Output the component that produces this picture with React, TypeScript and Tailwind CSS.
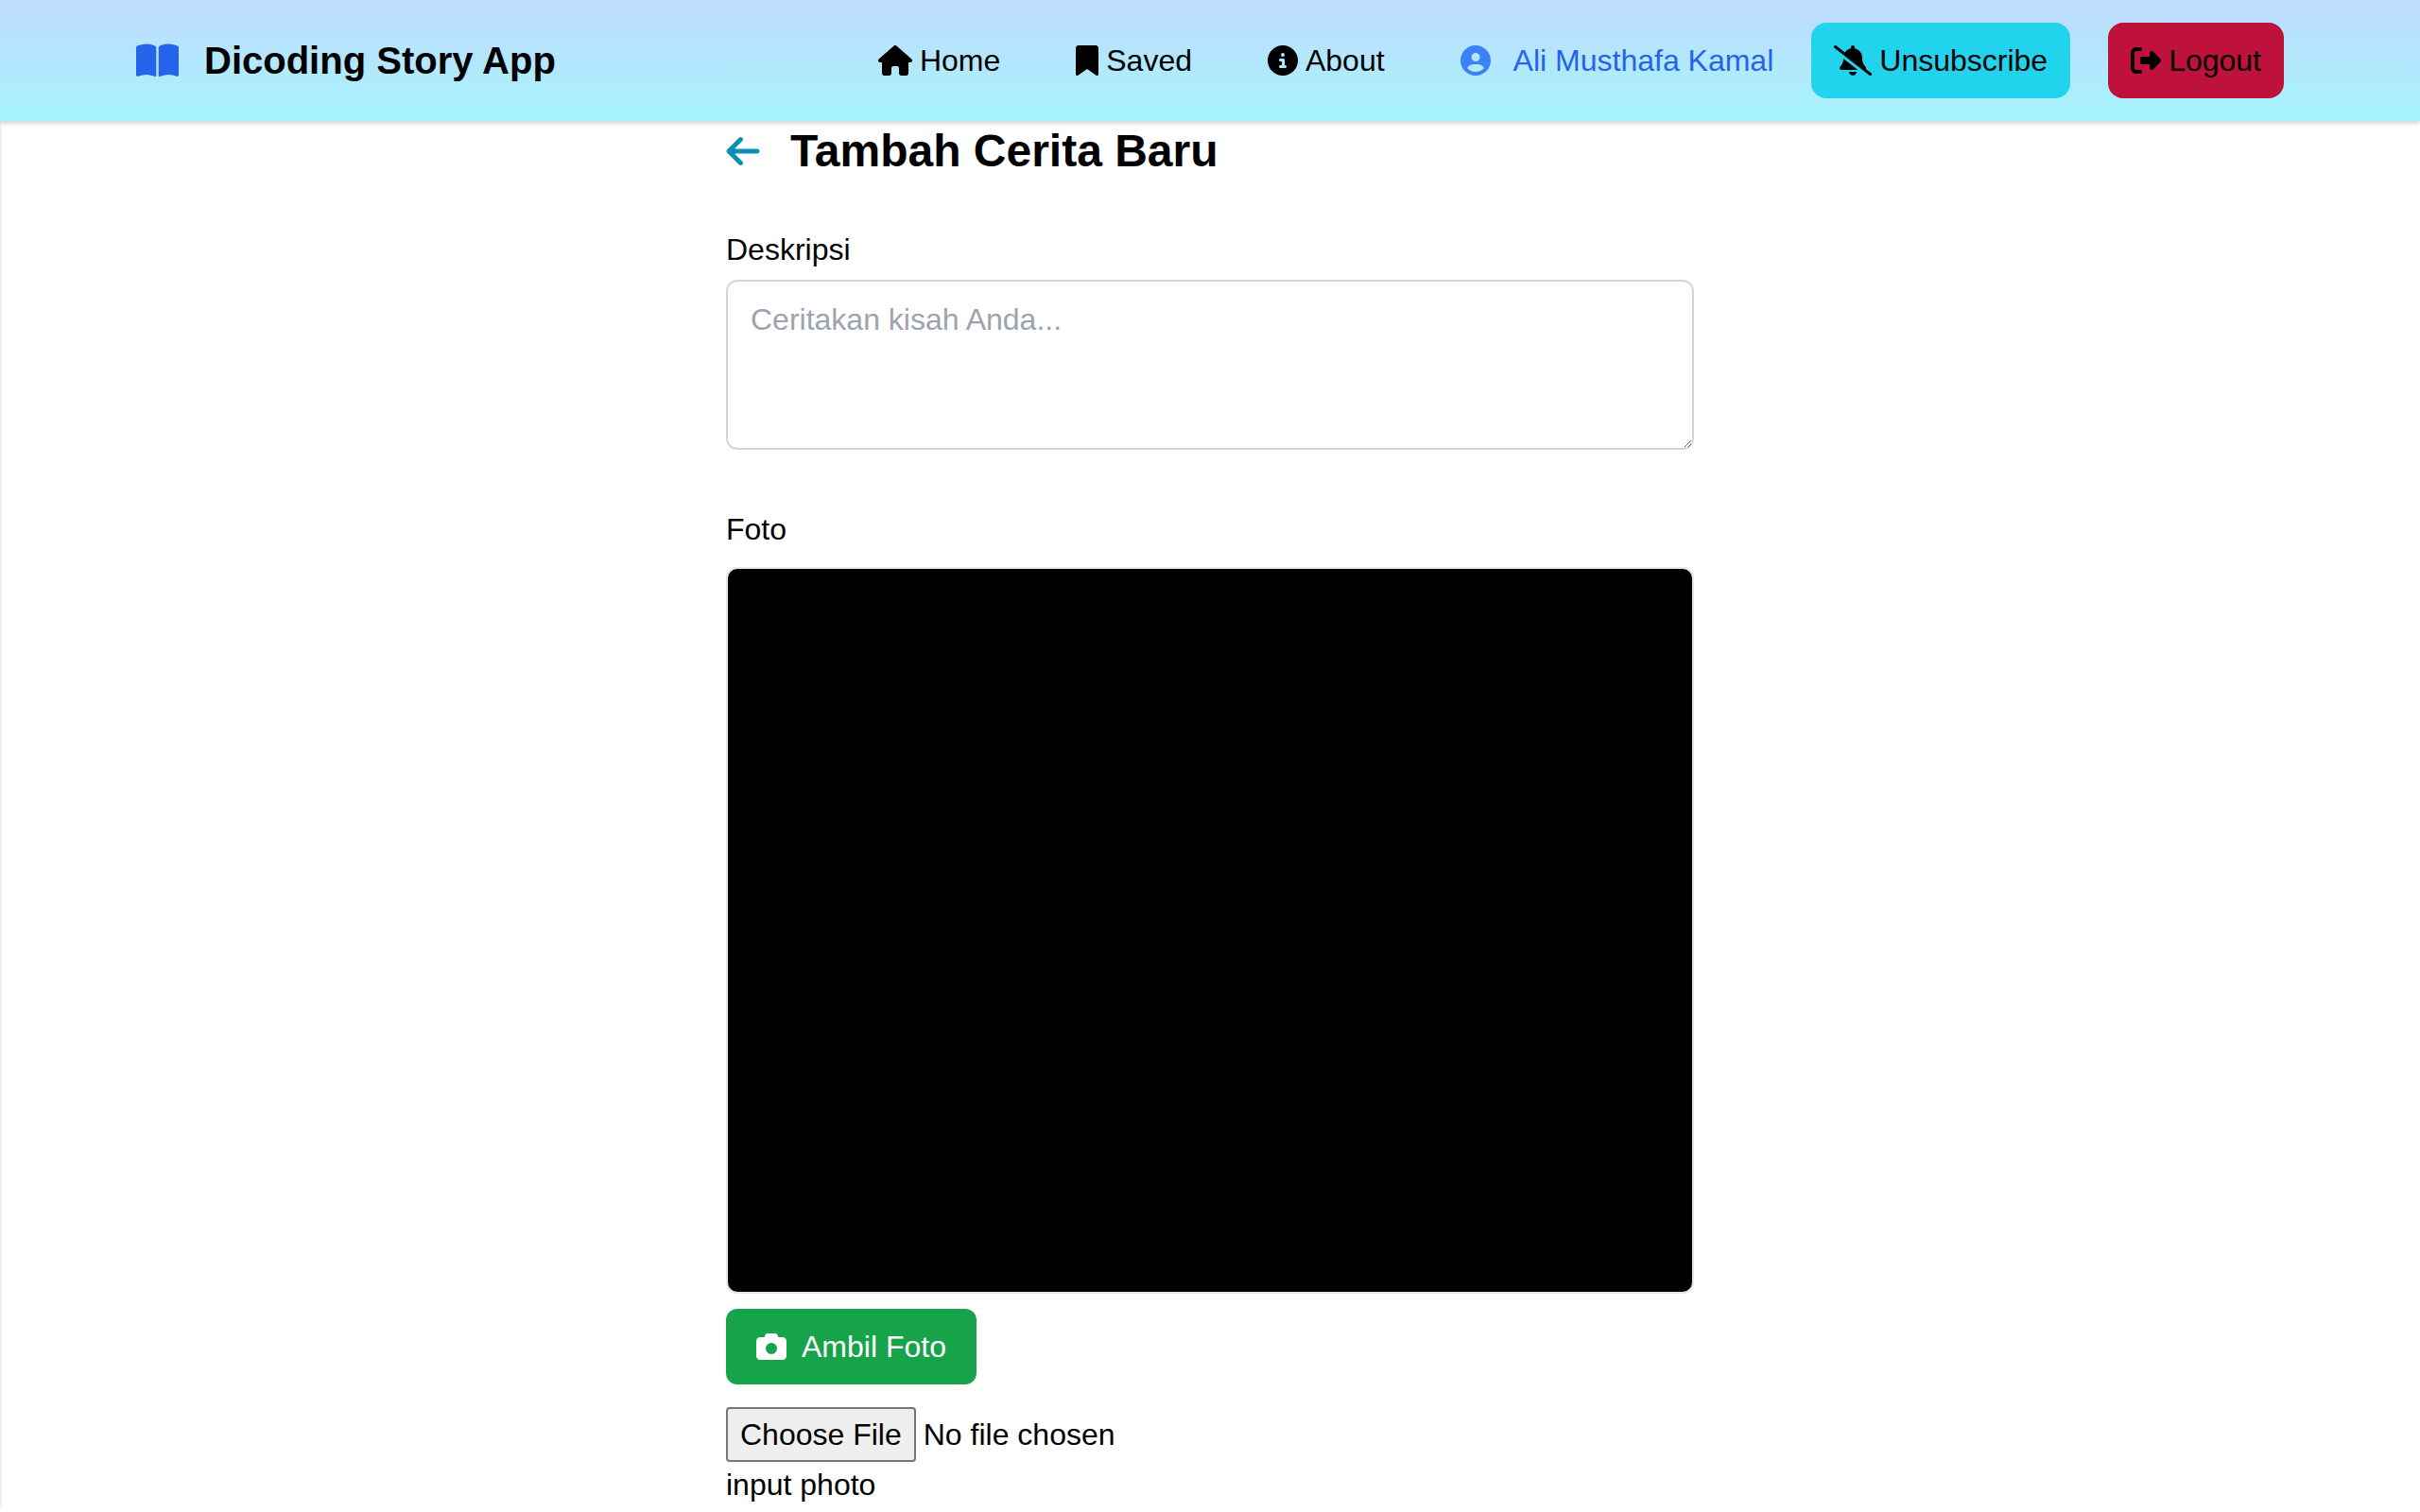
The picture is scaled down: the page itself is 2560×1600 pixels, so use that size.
import {
  FaArrowLeft,
  FaBellSlash,
  FaBookOpen,
  FaBookmark,
  FaCamera,
  FaCircleInfo,
  FaCircleUser,
  FaHouse,
  FaRightFromBracket,
} from "react-icons/fa6";

const links = [
  { label: "Home", Icon: FaHouse, size: "w-9" },
  { label: "Saved", Icon: FaBookmark, size: "w-6" },
  { label: "About", Icon: FaCircleInfo, size: "w-8" },
];

function Header() {
  return (
    <header className="relative z-10 flex h-32 items-center justify-between bg-linear-to-b from-[#bfdbfe] to-[#a5f3fc] px-36 shadow-[0_2px_6px_rgba(0,0,0,0.1),0_2px_4px_rgba(0,0,0,0.1)]">
      <a href="#" className="flex items-center gap-[27px] text-[40px] leading-[56px] font-bold">
        <FaBookOpen className="h-10 w-[45px] text-[#2563eb]" aria-hidden="true" />
        Dicoding Story App
      </a>
      <nav className="flex items-center gap-10">
        <ul className="flex items-center gap-20">
          {links.map(({ label, Icon, size }) => (
            <li key={label}>
              <a href="#" className="flex items-center gap-2">
                <Icon className={`h-8 ${size}`} aria-hidden="true" />
                {label}
              </a>
            </li>
          ))}
          <li>
            <a href="#" className="flex items-center gap-6 text-[#2563eb]">
              <FaCircleUser className="size-8 text-[#3b82f6]" aria-hidden="true" />
              Ali Musthafa Kamal
            </a>
          </li>
        </ul>
        <button type="button" className="flex h-20 items-center gap-2 rounded-2xl bg-[#22d3ee] px-6">
          <FaBellSlash className="h-8 w-10" aria-hidden="true" />
          Unsubscribe
        </button>
        <button type="button" className="flex h-20 items-center gap-2 rounded-2xl bg-[#be123c] px-6">
          <FaRightFromBracket className="size-8" aria-hidden="true" />
          Logout
        </button>
      </nav>
    </header>
  );
}

export default function App() {
  return (
    <div className="min-h-screen bg-white font-['Liberation_Sans',Arial,sans-serif] text-[32px] leading-[48px] text-black">
      <Header />
      <main className="shadow-[inset_2px_0_1px_#f0f1f2]">
        <form className="mx-auto flex w-full max-w-5xl flex-col items-start">
          <div className="flex items-center gap-8">
            <a href="#" aria-label="Kembali" className="text-[#0891b2]">
              <FaArrowLeft className="h-10 w-9" aria-hidden="true" />
            </a>
            <h1 className="text-5xl leading-[64px] font-bold">Tambah Cerita Baru</h1>
          </div>
          <label htmlFor="description" className="mt-12">
            Deskripsi
          </label>
          <textarea
            id="description"
            placeholder="Ceritakan kisah Anda..."
            className="mt-2 h-[180px] w-full rounded-xl border-2 border-gray-300 px-6 py-4 placeholder:text-[#9ca3af]"
          />
          <span className="mt-15">Foto</span>
          <div className="mt-4 w-full overflow-hidden rounded-xl border-2 border-gray-200">
            <video aria-label="Kamera" className="aspect-[4/3] w-full bg-black" />
          </div>
          <button
            type="button"
            className="mt-4 flex h-20 items-center gap-4 rounded-xl bg-[#16a34a] px-8 text-white"
          >
            <FaCamera className="size-8" aria-hidden="true" />
            Ambil Foto
          </button>
          <input
            id="photo"
            type="file"
            className="mt-6 w-full file:mr-2 file:rounded-sm file:border-2 file:border-solid file:border-[#767676] file:bg-[#efefef] file:px-[13px] file:py-[3px]"
          />
          <label htmlFor="photo">input photo</label>
        </form>
      </main>
    </div>
  );
}
